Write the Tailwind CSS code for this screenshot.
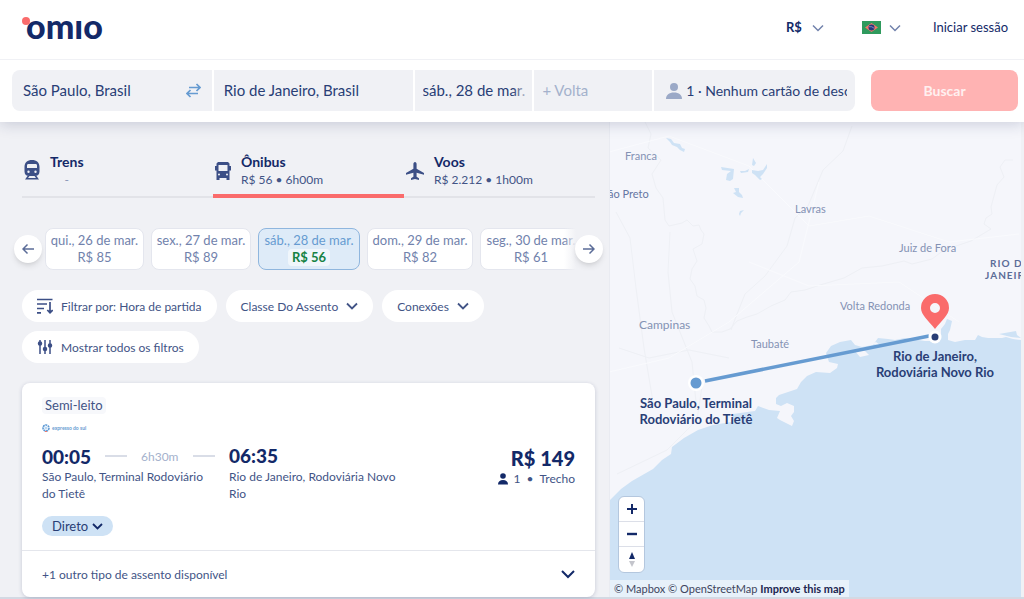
<!DOCTYPE html>
<html lang="pt-BR">
<head>
    <meta charset="UTF-8">
    <meta name="viewport" content="width=device-width, initial-scale=1.0">
    <title>Omio - São Paulo para Rio de Janeiro</title>
    <script src="https://cdn.jsdelivr.net/npm/@tailwindcss/browser@4"></script>
</head>
<body class="min-h-screen flex flex-col bg-[#f0f1f5] font-['Lato','Open_Sans',sans-serif] text-[12px] leading-[17px] text-[#425486]">

    <header class="relative z-10 bg-white shadow-[0_2px_14px_rgba(30,40,90,0.2)]">
        <div class="h-[60px] flex items-center justify-between pl-[26px] pr-4 pb-1 border-b border-[#f0f1f5]">
            <a href="#" class="relative block pb-1 text-[34px] leading-[34px] font-black text-[#132968]">
                <span class="absolute -left-1 top-2 size-2 rounded-full bg-[#fa6b6b]"></span>
                omıo
            </a>
            <nav class="flex items-center text-[13px]">
                <button type="button" class="flex items-center gap-2.5 font-bold text-[#132968]">
                    R$
                    <svg class="w-3 h-2" viewBox="0 0 12 8" fill="none" stroke="#7182ac" stroke-width="1.5"><path d="M1 1.5l5 5 5-5"/></svg>
                </button>
                <button type="button" aria-label="Idioma" class="flex items-center gap-2 ml-[38px]">
                    <svg class="w-[19px] h-[13px]" viewBox="0 0 19 13">
                        <rect width="19" height="13" fill="#2f9a5d"/>
                        <path d="M3 6.500L9.500 2l6.500 4.500-6.500 4.500z" fill="#f4776a"/>
                        <circle cx="9.500" cy="6.500" r="3" fill="#27367c"/>
                        <path d="M7 5.700q3-.6 5 1.500" stroke="#9fb0d8" stroke-width=".7" fill="none"/>
                    </svg>
                    <svg class="w-3 h-2" viewBox="0 0 12 8" fill="none" stroke="#7182ac" stroke-width="1.500"><path d="M1 1.500l5 5 5-5"/></svg>
                </button>
                <a href="#" class="ml-8 text-[#132968]">Iniciar sessão</a>
            </nav>
        </div>

        <form class="flex gap-4 pl-3 pr-1.5 pt-2.5 pb-[11px] text-[15px] text-[#293e76]">
            <div class="flex-1 min-w-0 h-[41px] grid grid-cols-[200fr_199fr_118fr_118fr_201fr] gap-0.5 rounded-lg overflow-hidden">
                <div class="flex items-center bg-[#f0f1f5] px-[11px]">
                    <input type="text" aria-label="Origem" value="São Paulo, Brasil" class="w-full min-w-0 outline-none">
                    <button type="button" aria-label="Inverter">
                        <svg class="w-[15px] h-[15px]" viewBox="0 0 15 15" fill="none" stroke="#669bd1" stroke-width="1.700"><path d="M3 4.500h10.500M10.500 1l3.500 3.500L10.500 8M12 10.500H1.500M4.500 7L1 10.500 4.500 14"/></svg>
                    </button>
                </div>
                <input type="text" aria-label="Destino" value="Rio de Janeiro, Brasil" class="min-w-0 w-full bg-[#f0f1f5] px-2.5 outline-none">
                <div class="relative flex bg-[#f0f1f5] pl-2">
                    <input type="text" aria-label="Ida" value="sáb., 28 de mar." class="min-w-0 w-full outline-none">
                    <span class="absolute right-0 inset-y-0 w-5 bg-linear-to-r from-transparent to-[#f0f1f5]"></span>
                </div>
                <input type="text" aria-label="Volta" placeholder="+ Volta" class="min-w-0 w-full bg-[#f0f1f5] px-2 outline-none placeholder:text-[#a4b1cc]">
                <button type="button" class="min-w-0 flex items-center gap-1 bg-[#f0f1f5] pl-3 pr-2 text-[14px]">
                    <svg class="w-4 h-4 shrink-0" viewBox="0 0 16 16" fill="#9ba9c7"><circle cx="8" cy="4" r="4"/><path d="M0 16c0-4 3-6.500 8-6.500s8 2.500 8 6.500z"/></svg>
                    <span class="overflow-hidden whitespace-nowrap text-left">1 · Nenhum cartão de desconto</span>
                </button>
            </div>
            <button type="submit" class="w-[147px] rounded-lg bg-[#ffb3b3] text-[14px] font-bold text-[#fff0f0]">Buscar</button>
        </form>
    </header>

    <main class="flex-1 flex border-b-2 border-[#d3d9e3]">
        <section class="w-[610px] shrink-0 pl-[22px] pr-3.5 pt-6 border-r border-[#e9ebf1]">

            <nav class="grid grid-cols-3 h-[52px] border-b-2 border-[#e2e3e8]">
                <a href="#" class="flex gap-2.5 pt-1.5 pl-0.5">
                    <svg class="w-4 h-5 mt-2" viewBox="0 0 16 20" fill="#3c4f86">
                        <path d="M8 0C3.500 0 .5 2.500 .5 7v4.500C.5 14.500 2.500 16 5 16h6c2.500 0 4.500-1.500 4.500-4.500V7C15.500 2.500 12.500 0 8 0zM4 4h8q1 0 1 1.500V8H3V5.500Q3 4 4 4zM4.500 10.500a1.200 1.200 0 110 2.400 1.200 1.200 0 010-2.400zm7 0a1.200 1.200 0 110 2.400 1.200 1.200 0 010-2.400z" fill-rule="evenodd"/>
                        <path d="M3.500 16L1 19.500h14L12.500 16h-2l1.500 2H4l1.500-2z"/>
                    </svg>
                    <span class="text-center">
                        <b class="block text-[14px] leading-[19px] text-[#132968]">Trens</b>
                        <span class="text-[#8996b6]">-</span>
                    </span>
                </a>
                <a href="#" aria-current="page" class="relative flex gap-2.5 pt-1.5 pl-0.5">
                    <svg class="w-4 h-[18px] mt-2.5" viewBox="0 0 16 18" fill="#3c4f86">
                        <path d="M3 0h10l1.500 1.500V4H16v4.500h-1.500V18H11.500v-2h-7v2h-3V8.500H0V4h1.500V1.500zM3.500 3v6h9V3zM4 11.500a1 1 0 100 2 1 1 0 000-2zm8 0a1 1 0 100 2 1 1 0 000-2z" fill-rule="evenodd"/>
                    </svg>
                    <span>
                        <b class="block text-[14px] leading-[19px] text-[#132968]">Ônibus</b>
                        <span>R$ 56 • 6h00m</span>
                    </span>
                    <span class="absolute inset-x-0 -bottom-0.5 h-1 bg-[#fa6b6b]"></span>
                </a>
                <a href="#" class="flex gap-2.5 pt-1.5 pl-0.5">
                    <svg class="w-[18px] h-[18px] mt-2.5" viewBox="0 0 18 18" fill="#3c4f86"><path d="M9 0c1 0 1.600 1 1.600 2v4.700L18 11v1.700l-7.400-2v4l2.400 1.600V18l-4-1-4 1v-1.700l2.400-1.600v-4L0 12.700V11l7.400-4.300V2C7.400 1 8 0 9 0z"/></svg>
                    <span>
                        <b class="block text-[14px] leading-[19px] text-[#132968]">Voos</b>
                        <span>R$ 2.212 • 1h00m</span>
                    </span>
                </a>
            </nav>

            <div class="relative -mx-2 mt-[30px] flex items-center text-[13px] text-[#7182ac]">
                <button type="button" aria-label="Dias anteriores" class="relative z-10 size-7 shrink-0 rounded-full bg-white shadow-md flex items-center justify-center">
                    <svg class="w-3 h-3" viewBox="0 0 12 12" fill="none" stroke="#5b6c98" stroke-width="1.500"><path d="M12 6H1M5.500 1.500L1 6l4.500 4.500"/></svg>
                </button>
                <div class="relative flex-1 min-w-0 ml-[3px] -mr-px overflow-hidden flex gap-[7px] whitespace-nowrap">
                    <button type="button" class="w-[99px] h-[42px] shrink-0 rounded-lg border border-[#e4e6ee] bg-white">qui., 26 de mar.<br>R$ 85</button>
                    <button type="button" class="w-[100px] h-[42px] shrink-0 rounded-lg border border-[#e4e6ee] bg-white">sex., 27 de mar.<br>R$ 89</button>
                    <button type="button" class="w-[102px] h-[42px] shrink-0 rounded-lg border border-[#8fb6de] bg-[#deebf8] text-[#669bd1]">sáb., 28 de mar.<br><b class="inline-block rounded-sm bg-[#f0f6fb] px-1 text-[#168243]">R$ 56</b></button>
                    <button type="button" class="w-[106px] h-[42px] shrink-0 rounded-lg border border-[#e4e6ee] bg-white">dom., 29 de mar.<br>R$ 82</button>
                    <button type="button" class="w-[102px] h-[42px] shrink-0 rounded-lg border border-[#e4e6ee] bg-white">seg., 30 de mar.<br>R$ 61</button>
                    <span class="absolute right-0 inset-y-0 w-3 bg-linear-to-r from-transparent to-[#f0f1f5]"></span>
                </div>
                <button type="button" aria-label="Próximos dias" class="relative z-10 size-7 shrink-0 rounded-full bg-white shadow-md flex items-center justify-center">
                    <svg class="w-3 h-3" viewBox="0 0 12 12" fill="none" stroke="#5b6c98" stroke-width="1.500"><path d="M0 6h11M6.500 1.500L11 6l-4.500 4.500"/></svg>
                </button>
            </div>

            <div class="mt-5 flex flex-wrap gap-[9px]">
                <button type="button" class="h-8 px-[15px] flex items-center gap-2 rounded-full bg-white">
                    <svg class="w-4 h-4" viewBox="0 0 16 16" fill="none" stroke="#3c4f86" stroke-width="1.700"><path d="M0 1.500h15.500M0 6h10M0 10.500h7M0 14.800h4M13 4v10.500M10.300 12l2.700 2.700 2.700-2.700"/></svg>
                    Filtrar por: Hora de partida
                </button>
                <button type="button" class="h-8 px-[15px] flex items-center gap-2 rounded-full bg-white">
                    Classe Do Assento
                    <svg class="w-3 h-2" viewBox="0 0 12 8" fill="none" stroke="#425486" stroke-width="1.800"><path d="M1 1.500l5 5 5-5"/></svg>
                </button>
                <button type="button" class="h-8 px-[15px] flex items-center gap-2 rounded-full bg-white">
                    Conexões
                    <svg class="w-3 h-2" viewBox="0 0 12 8" fill="none" stroke="#425486" stroke-width="1.800"><path d="M1 1.500l5 5 5-5"/></svg>
                </button>
                <button type="button" class="h-8 px-[15px] flex items-center gap-2 rounded-full bg-white">
                    <svg class="w-4 h-4" viewBox="0 0 16 16" fill="#3c4f86" stroke="#3c4f86" stroke-width="1.500"><path d="M3 1v14M8 1v14M13 1v14"/><circle cx="3" cy="4.500" r="1.500"/><circle cx="8" cy="10" r="1.500"/><circle cx="13" cy="6.500" r="1.500"/></svg>
                    Mostrar todos os filtros
                </button>
            </div>

            <article class="mt-5 rounded-lg bg-white shadow-[0_1px_4px_rgba(30,40,90,0.2)]">
                <div class="px-5 pt-3.5 pb-3.5">
                    <span class="inline-block rounded-sm bg-[#f7f8fb] px-[3px] text-[13px]">Semi-leito</span>
                    <div class="mt-1.5 flex items-center gap-0.5 h-4 text-[5px] leading-[8px] font-bold text-[#669bd1]">
                        <svg class="w-2 h-2" viewBox="0 0 8 8" fill="none"><circle cx="4" cy="4" r="3" stroke="#5b98d4" stroke-width="1.600" stroke-dasharray="2 .6"/><circle cx="4" cy="4" r="1.600" fill="#b9d6f1"/><path d="M3 7.500h2" stroke="#f4776a"/></svg>
                        expresso do sul
                    </div>
                    <div class="mt-2 flex">
                        <div class="w-[187px]">
                            <div class="flex items-center gap-3.5 h-6">
                                <b class="text-[19px] font-black text-[#132968]">00:05</b>
                                <span class="w-[22px] h-0.5 bg-[#d9dde7]"></span>
                                <span class="text-[#a4b1cc]">6h30m</span>
                                <span class="w-[22px] h-0.5 bg-[#d9dde7]"></span>
                            </div>
                            <p class="w-[175px]">São Paulo, Terminal Rodoviário do Tietê</p>
                        </div>
                        <div class="w-[175px]">
                            <b class="block h-6 leading-6 text-[19px] font-black text-[#132968]">06:35</b>
                            <p>Rio de Janeiro, Rodoviária Novo Rio</p>
                        </div>
                        <div class="ml-auto text-right pt-0.5">
                            <b class="block h-6 leading-6 text-[20px] font-black text-[#132968]">R$ 149</b>
                            <div class="flex items-center justify-end gap-1.5">
                                <svg class="w-2.5 h-3" viewBox="0 0 10 12" fill="#132968"><circle cx="5" cy="3" r="2.800"/><path d="M0 11.500C0 8.500 2 7 5 7s5 1.500 5 4.500z"/></svg>
                                <span>1</span><span>•</span><span>Trecho</span>
                            </div>
                        </div>
                    </div>
                    <button type="button" class="mt-3.5 h-5 px-2.5 flex items-center gap-1 rounded-full bg-[#cee2f5] text-[13px] text-[#293e76]">
                        Direto
                        <svg class="w-[11px] h-[7px]" viewBox="0 0 11 7" fill="none" stroke="#132968" stroke-width="1.800"><path d="M1 1l4.500 4.500L10 1"/></svg>
                    </button>
                </div>
                <button type="button" class="w-full h-[47px] px-5 flex items-center justify-between border-t border-[#e4e6ec]">
                    +1 outro tipo de assento disponível
                    <svg class="w-3.5 h-2.5" viewBox="0 0 14 10" fill="none" stroke="#132968" stroke-width="2"><path d="M1 2l6 6 6-6"/></svg>
                </button>
            </article>
        </section>

        <section aria-label="Mapa" class="relative flex-1 min-w-0 mr-[3px] overflow-hidden bg-[#f5f6fb]">
            <svg class="absolute inset-0 w-full h-full" viewBox="1 0 411 475" preserveAspectRatio="xMidYMid slice" font-size="11" fill="#8492b4">
                <!-- borders and roads -->
                <g fill="none" stroke="#eef0f5">
                    <path d="M36 0l6 12-3 14 13 12-9 14 4 14 7 10 2 22 4 6 13-3 5-3 6 6 6-1 2 5 3 4-2 10-9 5 4 12-5 8-2 10 5 7 2 10 7 4 2 8-2 10 5 8 3 6 10 0 8-3 7-8 10-4 10-3 14-8 14-6 6-8 14-2 15-5 24-7 18-10 20-2 22-5 8 3 20-5 12-9 27-9 20-12-7-5 2-6 6-4-1-7 6-22 7-8-4-10 5-7h8"/>
                    <path d="M243 4l-9 25-20 19-15 36-13 12-8 28-22 30-20 18-8 20-6 16M7 90l14 26 6 50 8 60 10 60M61 110l-2 40 4 40 20 50 4 40M10 226l30 10 40-8 40 8M94 258l-6 40-30 30-50 24"/>
                </g>
                <g fill="none" stroke="#f9fafd">
                    <path d="M0 30l60-16 80 30 60 60 60-10 80 26 70-8M0 250l60-14 60-36 70-60 20-80M140 140l60 24 90-4 60 40"/>
                </g>
                <!-- lakes -->
                <path d="M57 16l5 1 3 4 6 1 2 4 3 1-1 3-4-2-3-3-5-2-2-3zM112 45l13 2-1 10-3 2-4-1 1-6 4-3-9-1zM131 49l5 0 4-2-1 3-7 1zM144 36l3 5-2 3-2-1zM143 48l6 1 5-1 4-6 0 4-4 6-3 3 2 2-2 1-5-5-3-2zM125 66h5v4l3 3 1 3-5-1-5-4 3-1zM131 89l4-1-3 3-1 3-1-2z" fill="#cee2f5"/>
                <!-- coast -->
                <path d="M412 218l-8-1-7-2-4 1-14 0-6-1-4-2-3 5-10 0-10 2-7-2 0-6 2-4 2-9-5-2-2 5-4 5 0 9-5 3-11 0-20-3-10 2-7-1-10-1-5 7-11 2-7-2-4-5-11 2-9 4-5 7 3 9 9 2-1 4-7 5-14-1-9 4-6 6-4 7-18 6-3 3 0 6 5 2 6-3 7 3 0 6-3 4 3 5-2 5-12-6-3-2 3-7-11-1-11-4-3 5-15 2-7 1-2 8-18 3-15 5-14 8-12 9-1 7-9 6-9 9-21 12-11 8-11 11V475h412z" fill="#cee2f5"/>
                <path d="M390 212l17-3 1 4 4 3-10-1z" fill="#cee2f5"/>
                <path d="M246 229l10 0 4 4-9 2zM263 222l4-2 4 3z" fill="#f5f6fb"/>

                <path d="M96 259l224-45" stroke="#669bd1" stroke-width="3.500"/>
                <circle cx="87" cy="261" r="8" fill="#fff"/>
                <circle cx="87" cy="261" r="5.500" fill="#669bd1"/>
                <circle cx="326" cy="215" r="6.500" fill="#fff"/>
                <circle cx="326" cy="215" r="3.500" fill="#293e76"/>
                <path d="M326 172a14 14 0 00-14 14c0 7 7 12 14 21 7-9 14-14 14-21a14 14 0 00-14-14zm0 9a5 5 0 110 10 5 5 0 010-10z" fill="#fa6b6b" fill-rule="evenodd"/>

                <text x="16" y="38">Franca</text>
                <text x="-1" y="76" fill="#6677a3">ão Preto</text>
                <text x="186" y="91">Lavras</text>
                <text x="290" y="130">Juiz de Fora</text>
                <text x="231" y="188">Volta Redonda</text>
                <text x="30" y="207" font-size="12">Campinas</text>
                <text x="142" y="226">Taubaté</text>
                <g font-size="10" font-weight="700" letter-spacing="1" fill="#5b6c98">
                    <text x="381" y="145">RIO DE</text>
                    <text x="376" y="157">JANEIRO</text>
                </g>
                <g font-size="13" font-weight="700" fill="#293e76" text-anchor="middle">
                    <text x="87" y="286">São Paulo, Terminal</text>
                    <text x="87" y="302">Rodoviário do Tietê</text>
                    <text x="326" y="239">Rio de Janeiro,</text>
                    <text x="326" y="255">Rodoviária Novo Rio</text>
                </g>
            </svg>

            <div class="absolute left-2 bottom-6 w-[27px] rounded-md border border-[#b4c7de] bg-white divide-y divide-[#dcdfe8]">
                <button type="button" aria-label="Aproximar" class="w-full h-[25px] flex items-center justify-center"><svg class="w-2.5 h-2.5" viewBox="0 0 10 10" stroke="#132968" stroke-width="2"><path d="M0 5h10M5 0v10"/></svg></button>
                <button type="button" aria-label="Afastar" class="w-full h-[25px] flex items-center justify-center"><svg class="w-2.5 h-2.5" viewBox="0 0 10 10" stroke="#132968" stroke-width="2.400"><path d="M0 5h10"/></svg></button>
                <button type="button" aria-label="Norte" class="w-full h-[25px] flex items-center justify-center"><svg class="w-2 h-4" viewBox="0 0 8 16"><path d="M4 0l3 7H1z" fill="#132968"/><path d="M1 9h6l-3 6z" fill="#c4c5cc"/></svg></button>
            </div>

            <p class="absolute left-0 bottom-0 px-1 text-[11px] whitespace-nowrap bg-white/50 text-[#40455e]">
                <a href="#">© Mapbox</a> <a href="#">© OpenStreetMap</a> <a href="#" class="font-bold text-[#1c2550]">Improve this map</a>
            </p>
        </section>
    </main>

</body>
</html>
